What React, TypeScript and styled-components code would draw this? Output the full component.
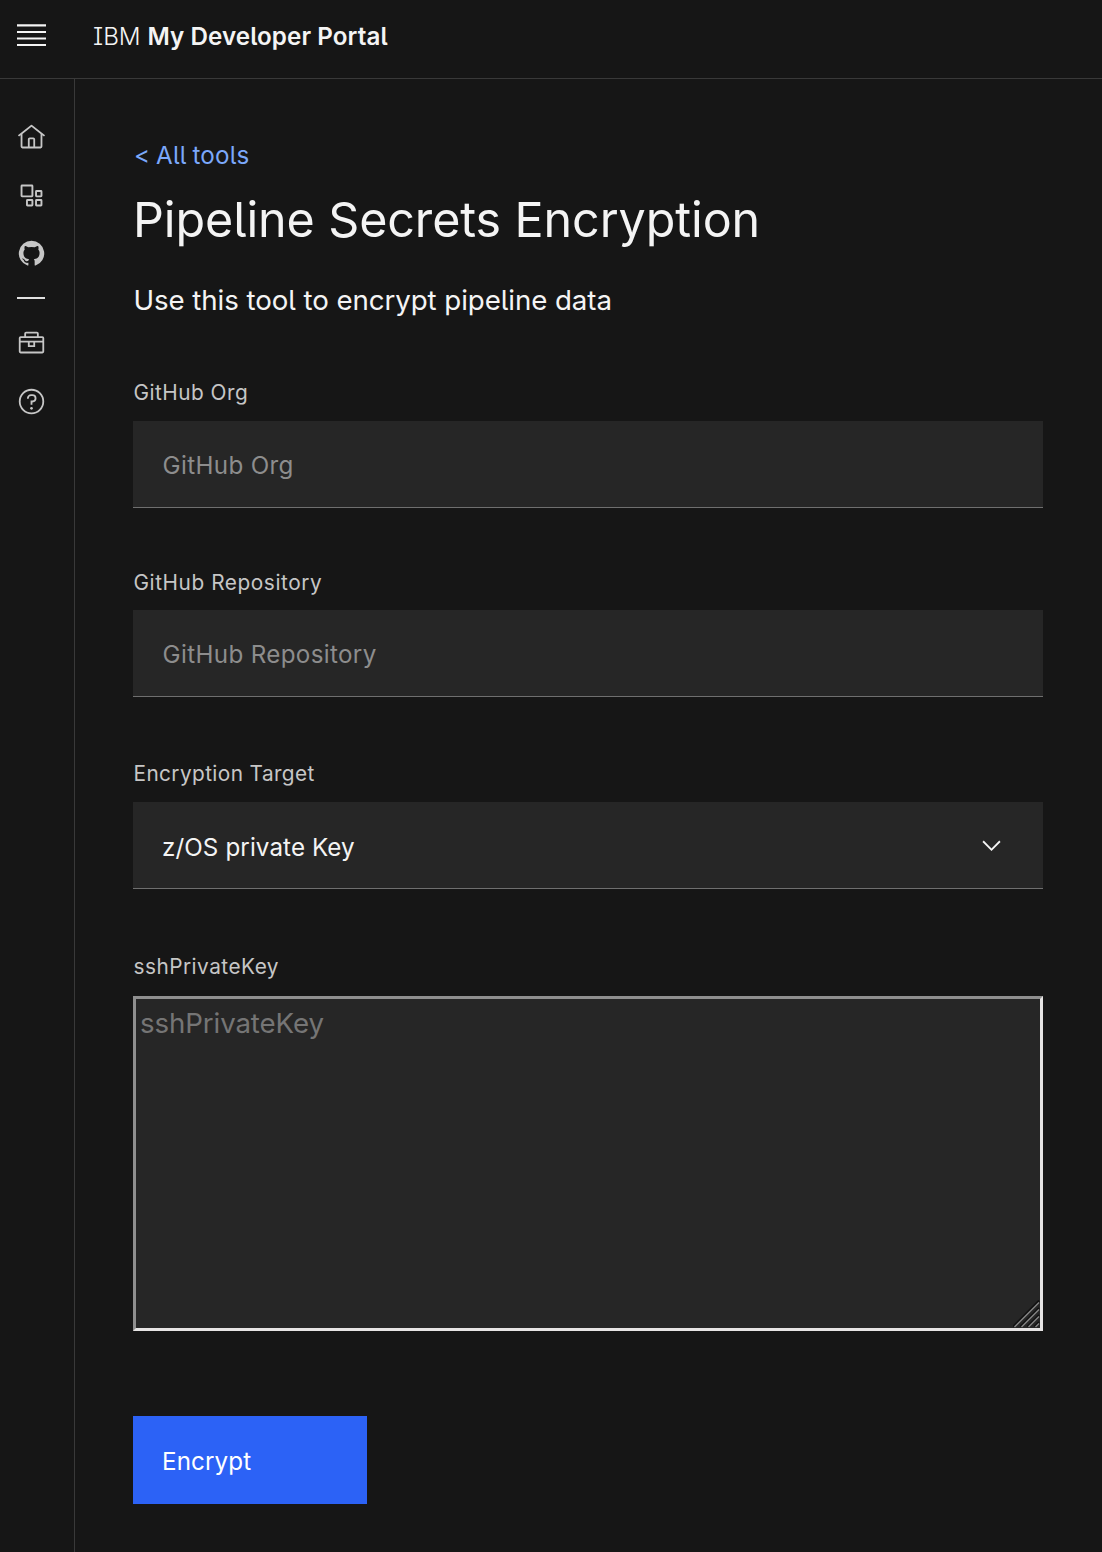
import React from "react";
import styled, { createGlobalStyle } from "styled-components";

const GlobalStyle = createGlobalStyle`
  * { box-sizing: border-box; }
  body {
    margin: 0;
    background: #161616;
    color: #f4f4f4;
    font-family: Inter, "Noto Sans", sans-serif;
    font-feature-settings: "cv05" 1, "cv08" 1;
  }
`;

const Page = styled.div`
  display: flex;
  flex-direction: column;
  width: 1102px;
  height: 1552px;
`;

const Header = styled.header`
  display: flex;
  align-items: center;
  height: 79px;
  padding: 0 17px 7px;
  border-bottom: 1px solid #393939;
`;

const MenuButton = styled.button`
  display: flex;
  width: 29px;
  height: 29px;
  padding: 0;
  border: 0;
  background: none;
  color: #f4f4f4;
`;

const Brand = styled.div`
  margin: 3px 0 0 47px;
  font-size: 24.2px;
  line-height: 34px;
  font-weight: 300;
  white-space: nowrap;
`;

const Product = styled.span`
  font-weight: 600;
  letter-spacing: 0.08px;
`;

const Body = styled.div`
  display: flex;
  flex: 1;
`;

const Rail = styled.nav`
  display: flex;
  flex-direction: column;
  gap: 29.25px;
  width: 75px;
  padding: 43.5px 0 0 17px;
  border-right: 1px solid #393939;
  color: #c6c6c6;
`;

const RailDivider = styled.hr`
  width: 28px;
  height: 2px;
  margin: -0.25px 0 0;
  border: 0;
  background: #e0e0e0;
`;

const Glyph = styled.svg`
  display: block;
  width: 29px;
  height: 29px;
  flex: none;
  fill: currentColor;
`;

const Main = styled.main`
  display: flex;
  flex-direction: column;
  align-items: flex-start;
  width: 968px;
  padding: 60px 0 0 58px;
`;

const BackLink = styled.a`
  margin-left: 1px;
  color: #7ba8fb;
  font-size: 24.2px;
  line-height: 34px;
  letter-spacing: 0.2px;
  word-spacing: -1.2px;
  text-decoration: none;
`;

const Title = styled.h1`
  margin: 15px 0 0;
  font-size: 48.4px;
  line-height: 64px;
  font-weight: 400;
  letter-spacing: -0.08px;
  white-space: nowrap;
`;

const Intro = styled.p`
  margin: 28px 0 59px 0.5px;
  font-size: 27.7px;
  line-height: 40px;
  letter-spacing: -0.08px;
`;

const Field = styled.div<{ $gap: number; $after: number }>`
  display: flex;
  flex-direction: column;
  gap: ${(p) => p.$gap}px;
  width: 910px;
  margin-bottom: ${(p) => p.$after}px;
`;

const Label = styled.label<{ $tracking?: number }>`
  padding-left: 0.5px;
  color: #c6c6c6;
  font-size: 20.8px;
  line-height: 28px;
  letter-spacing: ${(p) => p.$tracking ?? 0.48}px;
`;

const TextInput = styled.input`
  height: 87px;
  padding: 2px 29px 0 29.6px;
  border: 0;
  border-bottom: 1px solid #6f6f6f;
  border-radius: 0;
  outline: 0;
  background: #262626;
  color: #f4f4f4;
  font: inherit;
  font-feature-settings: inherit;
  font-size: 24.2px;
  letter-spacing: 0.34px;
  &::placeholder {
    color: #8d8d8d;
    opacity: 1;
  }
`;

const SelectBox = styled.div`
  display: flex;
  align-items: center;
  justify-content: space-between;
  height: 87px;
  padding: 1px 37px 0 29px;
  border-bottom: 1px solid #6f6f6f;
  background: #262626;
  font-size: 24.2px;
  letter-spacing: 0.1px;
`;

const SelectValue = styled.span`
  padding-top: 4px;
`;

const AreaFrame = styled.div`
  position: relative;
  display: flex;
  height: 335px;
`;

const TextArea = styled.textarea`
  width: 100%;
  height: 335px;
  padding: 4px;
  border: 3px solid;
  border-color: #8f8f8f #e6e4e4 #e6e4e4 #8f8f8f;
  border-radius: 0;
  outline: 0;
  resize: none;
  background: #262626;
  color: #f4f4f4;
  font: inherit;
  font-feature-settings: inherit;
  font-size: 27.7px;
  line-height: 40px;
  letter-spacing: -0.12px;
  &::placeholder {
    color: #757575;
    opacity: 1;
  }
`;

const Grip = styled.svg`
  position: absolute;
  right: 3px;
  bottom: 3px;
  width: 27px;
  height: 28px;
`;

const SubmitButton = styled.button`
  width: 234px;
  height: 88px;
  padding: 3px 29px 0;
  border: 0;
  background: #2c62f6;
  color: #ffffff;
  font: inherit;
  font-feature-settings: inherit;
  font-size: 24.2px;
  letter-spacing: 0.12px;
  text-align: left;
`;

const MenuIcon = () => (
  <Glyph viewBox="0 0 29 29">
    <path d="M0 3.3h29v2.2H0zM0 10h29v2H0zM0 16.4h29v2.2H0zM0 23h29v2H0z" />
  </Glyph>
);

const HomeIcon = () => (
  <Glyph viewBox="0 0 32 32">
    <path d="M16.6123,2.2138a1.01,1.01,0,0,0-1.2427,0L1,13.4194l1.2427,1.5717L4,13.6208V26a2.0041,2.0041,0,0,0,2,2H26a2.0037,2.0037,0,0,0,2-2V13.63L29.7573,15,31,13.4282ZM18,26H14V18h4Zm2,0V18a2.0023,2.0023,0,0,0-2-2H14a2.002,2.002,0,0,0-2,2v8H6V12.0615l10-7.79,10,7.8005V26Z" />
  </Glyph>
);

const AppsIcon = () => (
  <Glyph viewBox="0 0 32 32">
    <g fill="none" stroke="currentColor" strokeWidth="2.1">
      <rect x="5" y="5" width="12" height="12" rx="0.6" />
      <rect x="21" y="11" width="6" height="6" rx="0.6" />
      <rect x="11" y="21" width="6" height="6" rx="0.6" />
      <rect x="21" y="21" width="6" height="6" rx="0.6" />
    </g>
  </Glyph>
);

const GithubIcon = () => (
  <Glyph viewBox="0 0 32 32">
    <path d="M16,2a14,14,0,0,0-4.43,27.28c.7.13,1-.3,1-.67s0-1.21,0-2.38c-3.89.84-4.71-1.88-4.71-1.88A3.71,3.71,0,0,0,6.24,22.3c-1.27-.86.1-.85.1-.85A2.94,2.94,0,0,1,8.48,22.9a3,3,0,0,0,4.08,1.16,2.93,2.93,0,0,1,.88-1.87c-3.1-.36-6.37-1.56-6.37-6.92a5.4,5.4,0,0,1,1.44-3.76,5,5,0,0,1,.14-3.7s1.17-.38,3.85,1.43a13.3,13.3,0,0,1,7,0c2.67-1.81,3.84-1.43,3.84-1.43a5,5,0,0,1,.14,3.7,5.4,5.4,0,0,1,1.44,3.76c0,5.38-3.27,6.56-6.39,6.91a3.33,3.33,0,0,1,.95,2.59c0,1.87,0,3.38,0,3.84s.25.81,1,.67A14,14,0,0,0,16,2Z" />
  </Glyph>
);

const ToolboxIcon = () => (
  <Glyph viewBox="0 0 32 32">
    <g fill="none" stroke="currentColor" strokeWidth="2">
      <rect x="3" y="10" width="26" height="17" rx="1" />
      <path d="M3 15h26M9 10V6a1 1 0 0 1 1-1h12a1 1 0 0 1 1 1v4M13 15v5h6v-5" />
    </g>
  </Glyph>
);

const HelpIcon = () => (
  <Glyph viewBox="0 0 32 32">
    <path d="M16,2A14,14,0,1,0,30,16,14,14,0,0,0,16,2Zm0,26A12,12,0,1,1,28,16,12,12,0,0,1,16,28Z" />
    <circle cx="16" cy="23.5" r="1.5" />
    <path d="M17,8H15.5A4.49,4.49,0,0,0,11,12.5V13h2v-.5A2.5,2.5,0,0,1,15.5,10H17a2.5,2.5,0,0,1,0,5H15v4.5h2V17a4.5,4.5,0,0,0,0-9Z" />
  </Glyph>
);

const ChevronIcon = () => (
  <Glyph viewBox="0 0 16 16">
    <path d="M8 11 3 6l.7-.7L8 9.6l4.3-4.3.7.7z" />
  </Glyph>
);

export default function App() {
  return (
    <>
      <GlobalStyle />
      <Page>
        <Header>
          <MenuButton aria-label="Menu">
            <MenuIcon />
          </MenuButton>
          <Brand>
            IBM <Product>My Developer Portal</Product>
          </Brand>
        </Header>
        <Body>
          <Rail>
            <HomeIcon />
            <AppsIcon />
            <GithubIcon />
            <RailDivider />
            <ToolboxIcon />
            <HelpIcon />
          </Rail>
          <Main>
            <BackLink href="#">&lt; All tools</BackLink>
            <Title>Pipeline Secrets Encryption</Title>
            <Intro>Use this tool to encrypt pipeline data</Intro>
            <Field $gap={14} $after={61}>
              <Label htmlFor="org">GitHub Org</Label>
              <TextInput id="org" placeholder="GitHub Org" />
            </Field>
            <Field $gap={13} $after={63}>
              <Label htmlFor="repo" $tracking={0.57}>GitHub Repository</Label>
              <TextInput id="repo" placeholder="GitHub Repository" />
            </Field>
            <Field $gap={14} $after={64}>
              <Label $tracking={0.4}>Encryption Target</Label>
              <SelectBox role="combobox">
                <SelectValue>z/OS private Key</SelectValue>
                <ChevronIcon />
              </SelectBox>
            </Field>
            <Field $gap={15} $after={85}>
              <Label htmlFor="ssh">sshPrivateKey</Label>
              <AreaFrame>
                <TextArea id="ssh" placeholder="sshPrivateKey" />
                <Grip viewBox="0 0 27 28">
                  <g strokeWidth="1.8" fill="none">
                    <path stroke="#111111" d="M0 26.5 26 .5M7.5 26.5 26 8M14.5 26.5 26 15M21.5 26.5 26 22" />
                    <path stroke="#858585" strokeWidth="1.4" d="M1.5 27 26 2.5M8.5 27 26 9.5M15.5 27 26 16.5M22.5 27 26 23.5" />
                  </g>
                </Grip>
              </AreaFrame>
            </Field>
            <SubmitButton>Encrypt</SubmitButton>
          </Main>
        </Body>
      </Page>
    </>
  );
}
